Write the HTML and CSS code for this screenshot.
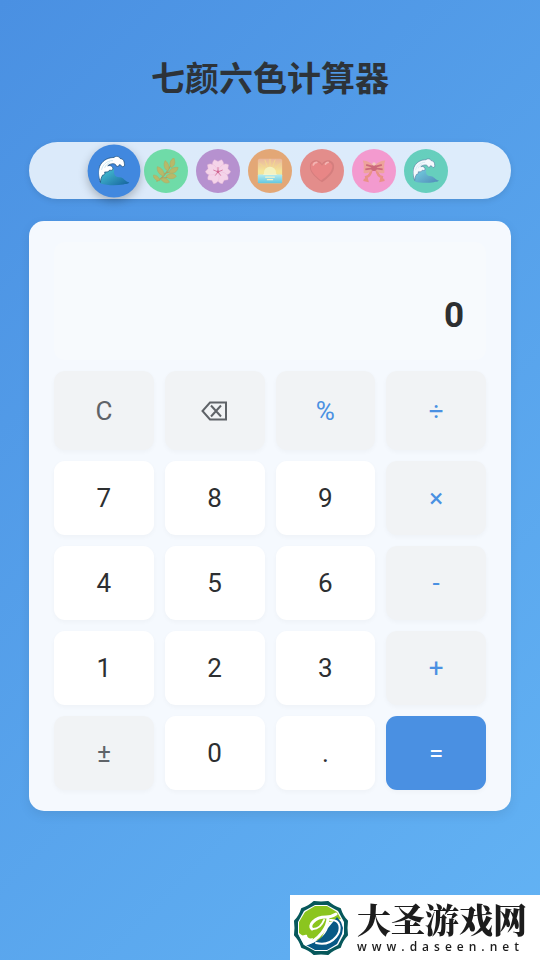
FILE: index.html
```html
<!DOCTYPE html>
<html lang="zh-CN">
<head>
  <meta charset="UTF-8">
  <meta name="viewport" content="width=device-width, initial-scale=1.0">
  <title>七颜六色计算器</title>
  <link rel="stylesheet" href="styles.css">
</head>
<body>

  <svg class="defs" aria-hidden="true">
    <defs>
      <linearGradient id="sea" x1="0" y1="0" x2="1" y2="1">
        <stop offset="0" stop-color="#4fd0dc"/>
        <stop offset="1" stop-color="#14609c"/>
      </linearGradient>
      <linearGradient id="sky" x1="0" y1="0" x2="0" y2="1">
        <stop offset="0" stop-color="#f0a078"/>
        <stop offset="0.5" stop-color="#ffe36e"/>
      </linearGradient>
      <linearGradient id="water" x1="0" y1="0" x2="0" y2="1">
        <stop offset="0" stop-color="#a5ecec"/>
        <stop offset="1" stop-color="#35b9d3"/>
      </linearGradient>
      <symbol id="wave" viewBox="0 0 30 30">
        <path fill="url(#sea)" d="M2 27C1 20 4 13 9 11c4-1 7 1 6 5 0 4 3 5 6 5 3 0 4 4 9 5-2 2-4 1-6 2-7 1-16 1-22-1z"/>
        <path fill="#fff" stroke="#174a78" stroke-width=".7" stroke-linejoin="round" d="M2 26C0 21-1 14 2 9 5 4 10 2 15 2c2-2 5-1 6 1 3 0 4 3 4 5 1 2-1 3-2 3-1-1-1-2-3-2 0 2-2 2-3 1 0-1-1-2-3-2-2 0-4 1-5 2 3-1 5 1 5 3 0 1-2 2-3 1-1 2-3 2-5 2 1 2-1 3-2 3-1 2-2 4-2 7z"/>
        <path fill="none" stroke="#b9dfea" stroke-width=".7" d="M3 14c1-5 5-9 11-9M6 12c1-3 3-4 5-5"/>
      </symbol>
    </defs>
  </svg>

  <h1 class="title">七颜六色计算器</h1>

  <div class="themes">
    <button class="theme ocean active" aria-label="海洋">
      <svg class="emoji"><use href="#wave"/></svg>
    </button>
    <button class="theme forest" aria-label="森林">
      <svg class="emoji" viewBox="0 0 30 30">
        <path fill="none" stroke="#9c8420" stroke-width="1.4" d="M4 27c7-3 13-11 19-23M9 23c5 1 9-1 14-3M13 18c5-1 8-2 13-5"/>
        <g fill="#aaa52c" stroke="#9c8f22" stroke-width=".6">
          <path d="M21 11c-3-4-1-9 3-11 2 4 2 9-3 11z"/>
          <path d="M17 15c-5-3-5-8-3-12 4 3 6 8 3 12z"/>
          <path d="M12 21C7 19 4 15 5 10c5 1 9 6 7 11z"/>
          <path d="M8 26c-4 1-7-2-8-6 4-1 7 2 8 6z"/>
          <path d="M18 17c2-5 6-7 11-6-1 5-5 8-11 6z"/>
          <path d="M15 21c4-4 9-4 12 0-3 4-9 4-12 0z"/>
          <path d="M9 24c4-2 8 0 10 4-4 2-8 0-10-4z"/>
        </g>
      </svg>
    </button>
    <button class="theme sakura" aria-label="樱花">
      <svg class="emoji" viewBox="0 0 30 30">
        <g fill="#ffcbe3" stroke="#f4a9cd" stroke-width=".5">
          <path id="petal" d="M15 16C8 12 7 5 11 2l4 2 4-2c4 3 3 10-4 14z"/>
          <use href="#petal" transform="rotate(72 15 16)"/>
          <use href="#petal" transform="rotate(144 15 16)"/>
          <use href="#petal" transform="rotate(216 15 16)"/>
          <use href="#petal" transform="rotate(288 15 16)"/>
        </g>
        <g stroke="#cc2c64" stroke-width=".9" stroke-linecap="round">
          <path d="M15 16v-5M15 16l5-2M15 16l3 4M15 16l-3 4M15 16l-5-2"/>
        </g>
        <circle cx="15" cy="16" r="1.6" fill="#cc2c64"/>
      </svg>
    </button>
    <button class="theme sunset" aria-label="日落">
      <svg class="emoji" viewBox="0 0 30 30">
        <rect x="1" y="1" width="28" height="28" rx="2" fill="url(#sky)"/>
        <path stroke="#ffd45c" stroke-width="1" d="M15 1v8M9 2l3 8M21 2l-3 8M3 6l7 7M27 6l-7 7"/>
        <circle cx="15" cy="17" r="7" fill="#fff6a5"/>
        <rect x="1" y="19" width="28" height="10" rx="1" fill="url(#water)"/>
        <path stroke="#fff8b8" stroke-width="1.5" stroke-linecap="round" d="M8 19h14M10 22h10M12 25h6"/>
      </svg>
    </button>
    <button class="theme heart" aria-label="红心">
      <svg class="emoji" viewBox="0 0 30 30">
        <path fill="#d2514a" d="M15 28C8 23 1 17 1 10c0-8 10-10 14-3 4-7 14-5 14 3 0 7-7 13-14 18z"/>
        <path fill="#ee5c55" d="M14 26C8 21 2 16 2 10c0-7 9-8 13-1 3-6 10-6 12 0 0 7-6 12-13 17z"/>
        <path fill="none" stroke="#ff9e94" stroke-width="2" stroke-linecap="round" d="M5 8c1-3 3-3 4-3M19 7c1-2 2-2 3-2"/>
      </svg>
    </button>
    <button class="theme ribbon" aria-label="蝴蝶结">
      <svg class="emoji" viewBox="0 0 30 30">
        <path fill="none" stroke="#ef6b55" stroke-width="3" d="M12 14c-1 5-3 7-6 8l1 4-4-1M18 14c1 5 3 7 6 8l-1 4 4-1"/>
        <path fill="#f58672" d="M14 9C10 4 5 3 2 3c2 4 1 9 1 14 4 2 8-1 11-4zM16 9c4-5 9-6 12-6-2 4-1 9-1 14-4 2-8-1-11-4z"/>
        <path fill="none" stroke="#c73345" stroke-width="2" d="M13 10L6 8M13 12l-8 1M17 10l7-2M17 12l8 1"/>
        <rect x="12" y="8" width="6" height="7" rx="2" fill="#c73345"/>
        <circle cx="15" cy="7" r="2" fill="#ffc2a8"/>
      </svg>
    </button>
    <button class="theme mint" aria-label="薄荷">
      <svg class="emoji"><use href="#wave"/></svg>
    </button>
  </div>

  <main class="calculator">
    <output class="display">0</output>

    <div class="keys">
      <button class="key func">C</button>
      <button class="key func" aria-label="退格">
        <svg class="backspace" viewBox="0 0 27 20">
          <path d="M9 1.500h16v17H9L1.500 10zM10 4.500l10 11M20 4.500l-10 11"/>
        </svg>
      </button>
      <button class="key operator">%</button>
      <button class="key operator">÷</button>

      <button class="key">7</button>
      <button class="key">8</button>
      <button class="key">9</button>
      <button class="key operator">×</button>

      <button class="key">4</button>
      <button class="key">5</button>
      <button class="key">6</button>
      <button class="key operator">-</button>

      <button class="key">1</button>
      <button class="key">2</button>
      <button class="key">3</button>
      <button class="key operator">+</button>

      <button class="key func">±</button>
      <button class="key">0</button>
      <button class="key">.</button>
      <button class="key equals">=</button>
    </div>
  </main>

  <div class="site-badge">
    <svg class="site-logo" viewBox="0 0 56 56" aria-hidden="true">
      <path fill="#07585b" stroke="#07585b" stroke-width="2" stroke-linejoin="round" d="M21 2q7 1 14 0 5 5 12 7 2 7 7 12-1 7 0 14-5 5-7 12-7 2-12 7-7-1-14 0-5-5-12-7-2-7-7-12 1-7 0-14 5-5 7-12 7-2 12-7z"/>
      <path fill="#fff" d="M22 5h12l11 6 6 11v12l-6 11-11 6H22l-11-6-6-11V22l6-11z"/>
      <path fill="#8bc51f" d="M22 6h12l10 6 4 7-12 3-9 19-13-2-8-6V22l6-10z"/>
      <path fill="#075985" d="M44 17l4 5 2 6-1 6-5 10-10 6H22l-9-5c11-2 19-9 22-17z"/>
      <!-- swirl -->
      <path fill="none" stroke="#fff" stroke-width="3" stroke-linecap="round" d="M19 29c-4-3 2-12 14-12 4 0 7-1 10-3M35 18c0 9-9 22-22 26"/>
      <path fill="none" stroke="#fff" stroke-width="2" stroke-linecap="round" d="M37 20c11-1 12 10 6 17-5 6-12 8-20 6M20 29c5 0 9-4 11-9"/>
      <path fill="#fff" d="M6 35c4 2 5-1 8 0 0 3 3 4 6 3-1 4-5 7-9 7z"/>
    </svg>
    <div class="site-text">
      <span class="site-name">大圣游戏网</span>
      <span class="site-url">www.daseen.net</span>
    </div>
  </div>

</body>
</html>
```
FILE: styles.css
```css
* {
  box-sizing: border-box;
}

body {
  font-family: Roboto, 'Noto Sans CJK SC', sans-serif;
  background: linear-gradient(135deg, #4a90e2, #63b3f4);
  min-height: 100vh;
  margin: 0;
  padding: 52px 29px 0;
  color: #2d2f31;
}

button {
  font-family: inherit;
  border: none;
  padding: 0;
  cursor: pointer;
}

.defs {
  position: absolute;
  width: 0;
  height: 0;
}

.title {
  margin: 0 0 36px;
  font-size: 34px;
  line-height: 54px;
  font-weight: bold;
  text-align: center;
  color: #2d3339;
}

/* theme switcher */
.themes {
  display: flex;
  justify-content: center;
  align-items: center;
  gap: 8px;
  height: 57px;
  margin-bottom: 22px;
  background: rgba(255, 255, 255, 0.8);
  border-radius: 29px;
  box-shadow: 0 2px 6px rgba(0, 0, 0, 0.1);
}

.theme {
  display: flex;
  justify-content: center;
  align-items: center;
  width: 44px;
  height: 44px;
  border-radius: 50%;
  opacity: 0.7;
}

.theme.active {
  opacity: 1;
  transform: scale(1.2);
  box-shadow: 0 3px 8px rgba(0, 0, 0, 0.25);
}

.emoji {
  width: 26px;
  height: 26px;
}

.ocean { background: #4188df; }
.forest { background: #42d686; }
.sakura { background: #a66cbd; }
.sunset { background: #e78b3f; }
.heart { background: #e7665d; }
.ribbon { background: #fd79bd; }
.mint { background: #34c3a4; }

.calculator {
  padding: 21px 25px;
  background: #f5f9fe;
  border-radius: 15px;
  box-shadow: 0 4px 12px rgba(0, 0, 0, 0.08);
}

.display {
  display: flex;
  justify-content: flex-end;
  align-items: flex-end;
  height: 118px;
  margin-bottom: 11px;
  padding: 0 22px 23px;
  background: #f7fafd;
  border-radius: 11px;
  font-size: 35px;
  line-height: 42px;
  font-weight: bold;
}

.keys {
  display: grid;
  grid-template-columns: repeat(4, 1fr);
  grid-template-rows: 79px;
  grid-auto-rows: 74px;
  gap: 11px;
}

.key {
  display: flex;
  justify-content: center;
  align-items: center;
  background: #fff;
  border-radius: 11px;
  box-shadow: 0 2px 5px rgba(0, 0, 0, 0.03);
  font-size: 26px;
  color: #2d2f31;
}

.func,
.operator {
  background: #f1f3f5;
}

.func {
  color: #5f6368;
}

.operator {
  color: #4a90e2;
}

.equals {
  background: #4a90e2;
  color: #fff;
}

.backspace {
  width: 27px;
  height: 20px;
  fill: none;
  stroke: #5f6368;
  stroke-width: 2;
}

/* corner badge */
.site-badge {
  position: fixed;
  right: 0;
  bottom: 0;
  display: flex;
  align-items: center;
  gap: 8px;
  width: 250px;
  height: 65px;
  padding-left: 3px;
  background: #fff;
  color: #1c1c1c;
}

.site-logo {
  width: 56px;
  height: 56px;
}

.site-text {
  display: flex;
  flex-direction: column;
}

.site-name {
  font-family: 'Noto Serif CJK SC', 'Noto Sans CJK SC', serif;
  font-size: 34px;
  line-height: 38px;
  font-weight: 900;
}

.site-url {
  font-family: 'Open Sans', sans-serif;
  font-size: 12px;
  line-height: 18px;
  font-weight: 600;
  letter-spacing: 5px;
}
```
